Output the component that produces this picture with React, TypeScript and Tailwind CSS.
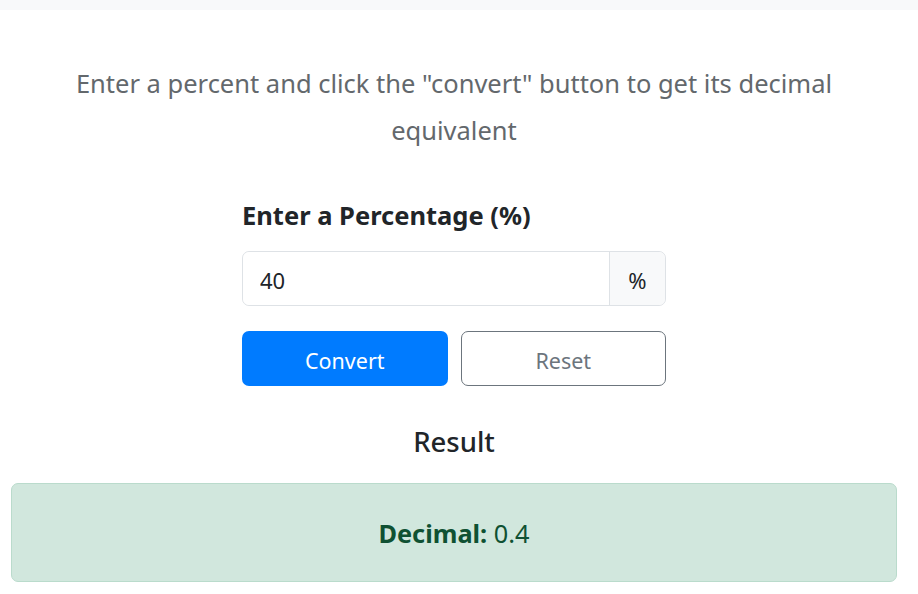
export default function App() {
  const font = { fontFamily: '"Noto Sans", "Open Sans", sans-serif' };
  return (
    <div className="min-h-[594px] bg-white" style={font}>
      <div className="h-[10px] bg-[#f8f9fa]" />
      <div className="w-[908px] px-[11px]">
        <p className="mt-[50px] text-center text-[25.5px] leading-[47px] text-[#63686c] px-[40px]">
          Enter a percent and click the "convert" button to get its decimal equivalent
        </p>
        <div className="mx-auto mt-[45px] w-[424px]">
          <label className="block text-[25.5px] font-bold leading-[32px] text-[#212529]">
            Enter a Percentage (%)
          </label>
          <div className="mt-[20px] flex h-[55px] rounded-[7px] border border-[#dee2e6]">
            <input
              className="min-w-0 flex-1 rounded-l-[7px] bg-white px-[17px] pt-[4px] text-[22px] text-[#212529] outline-none"
              defaultValue="40"
            />
            <span className="flex w-[56px] items-center justify-center rounded-r-[7px] border-l border-[#dee2e6] bg-[#f8f9fa] pt-[4px] text-[22px] text-[#212529]">
              %
            </span>
          </div>
          <div className="mt-[25px] grid grid-cols-2 gap-[13px]">
            <button className="h-[55px] rounded-[7px] bg-[#007bff] pt-[5px] text-[21.5px] text-white">Convert</button>
            <button className="h-[55px] rounded-[7px] border border-[#6c757d] bg-white pt-[5px] text-[21.5px] text-[#6c757d]">
              Reset
            </button>
          </div>
          <h2 className="mt-[38px] text-center text-[27.5px] font-medium leading-[35px] text-[#212529]">Result</h2>
        </div>
        <div className="mt-[24px] flex h-[99px] items-center justify-center rounded-[7px] border border-[#badbcc] bg-[#d1e7dd] pt-[3px] text-[25.3px] text-[#0f5132]">
          <span>
            <strong className="font-bold">Decimal:</strong> 0.4
          </span>
        </div>
      </div>
    </div>
  );
}
